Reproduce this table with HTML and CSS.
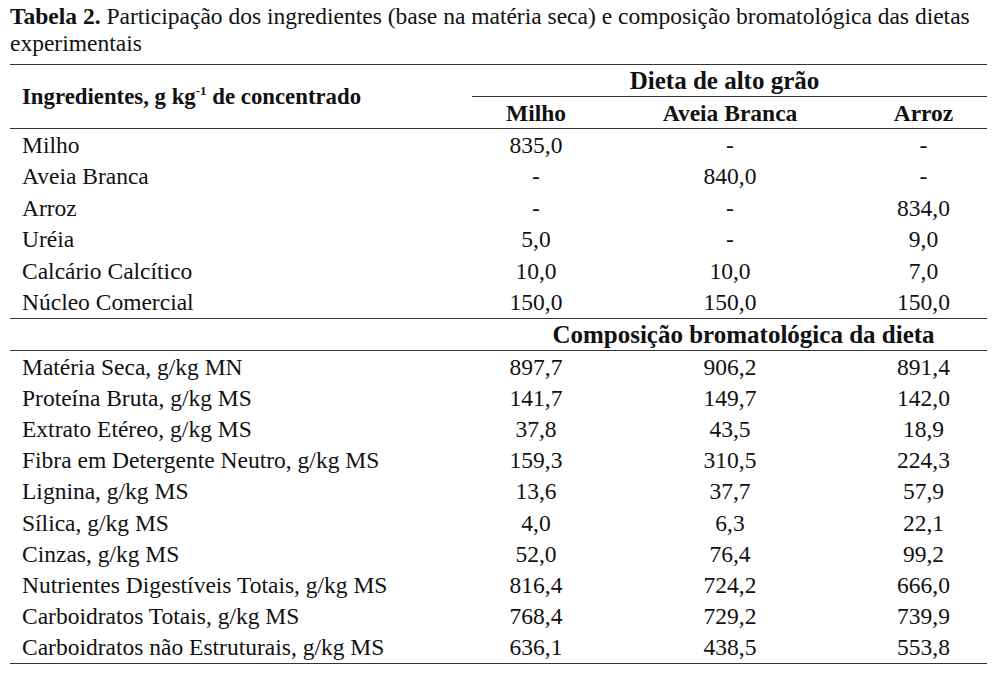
FILE: index.html
```html
<!DOCTYPE html>
<html lang="pt">
<head>
<meta charset="utf-8">
<title>Tabela 2</title>
<link rel="stylesheet" href="styles.css">
</head>
<body>
<div class="page">
  <p class="caption"><b>Tabela 2.</b> Participação dos ingredientes (base na matéria seca) e composição bromatológica das dietas<br>experimentais</p>
  <table class="tbl">
    <colgroup>
      <col class="c-name">
      <col class="c-milho">
      <col class="c-aveia">
      <col class="c-arroz">
    </colgroup>
    <thead>
      <tr class="h1">
        <th rowspan="2" class="name-h">Ingredientes, g kg<sup>-1</sup> de concentrado</th>
        <th colspan="3" class="group">Dieta de alto grão</th>
      </tr>
      <tr class="h2">
        <th>Milho</th>
        <th>Aveia Branca</th>
        <th>Arroz</th>
      </tr>
    </thead>
    <tbody class="g1">
      <tr><td>Milho</td><td>835,0</td><td>-</td><td>-</td></tr>
      <tr><td>Aveia Branca</td><td>-</td><td>840,0</td><td>-</td></tr>
      <tr><td>Arroz</td><td>-</td><td>-</td><td>834,0</td></tr>
      <tr><td>Uréia</td><td>5,0</td><td>-</td><td>9,0</td></tr>
      <tr><td>Calcário Calcítico</td><td>10,0</td><td>10,0</td><td>7,0</td></tr>
      <tr class="last"><td>Núcleo Comercial</td><td>150,0</td><td>150,0</td><td>150,0</td></tr>
    </tbody>
    <tbody class="sub">
      <tr><th></th><th colspan="3" class="sub-title">Composição bromatológica da dieta</th></tr>
    </tbody>
    <tbody class="g2">
      <tr><td>Matéria Seca, g/kg MN</td><td>897,7</td><td>906,2</td><td>891,4</td></tr>
      <tr><td>Proteína Bruta, g/kg MS</td><td>141,7</td><td>149,7</td><td>142,0</td></tr>
      <tr><td>Extrato Etéreo, g/kg MS</td><td>37,8</td><td>43,5</td><td>18,9</td></tr>
      <tr><td>Fibra em Detergente Neutro, g/kg MS</td><td>159,3</td><td>310,5</td><td>224,3</td></tr>
      <tr><td>Lignina, g/kg MS</td><td>13,6</td><td>37,7</td><td>57,9</td></tr>
      <tr><td>Sílica, g/kg MS</td><td>4,0</td><td>6,3</td><td>22,1</td></tr>
      <tr><td>Cinzas, g/kg MS</td><td>52,0</td><td>76,4</td><td>99,2</td></tr>
      <tr><td>Nutrientes Digestíveis Totais, g/kg MS</td><td>816,4</td><td>724,2</td><td>666,0</td></tr>
      <tr><td>Carboidratos Totais, g/kg MS</td><td>768,4</td><td>729,2</td><td>739,9</td></tr>
      <tr class="last"><td>Carboidratos não Estruturais, g/kg MS</td><td>636,1</td><td>438,5</td><td>553,8</td></tr>
    </tbody>
  </table>
</div>
</body>
</html>
```

FILE: styles.css
```css
html, body {
  margin: 0;
  padding: 0;
  background: #fff;
}
body {
  font-family: "Liberation Serif", "Times New Roman", serif;
  color: #111;
  font-size: 23.5px;
}
.page {
  padding: 3px 10px 0 10px;
}
.caption {
  margin: 0;
  line-height: 27px;
  font-size: 23.5px;
  height: 61px;
  white-space: nowrap;
}
.caption b {
  font-weight: bold;
}
.tbl {
  width: 977px;
  border-collapse: collapse;
  border-top: 1px solid #333;
  border-bottom: 1px solid #333;
  table-layout: fixed;
}
.c-name { width: 462px; }
.c-milho { width: 128px; }
.c-aveia { width: 260px; }
.c-arroz { width: 127px; }
.tbl th, .tbl td {
  padding: 0;
  vertical-align: middle;
  line-height: 24px;
}
.tbl th {
  font-weight: bold;
  text-align: center;
  font-size: 23.5px;
}
.tbl td {
  text-align: center;
}
.tbl td:first-child {
  text-align: left;
  padding-left: 12px;
}
.tbl .name-h {
  text-align: left;
  padding-left: 12px;
  font-size: 22.8px;
  border-bottom: 1px solid #333;
}
.name-h sup {
  font-size: 13px;
  vertical-align: 9px;
  line-height: 0;
}
.h1 th { height: 31px; }
.tbl .group {
  border-bottom: 1px solid #333;
  font-size: 25px;
  padding-right: 10px;
}
.h2 th {
  height: 31px;
  border-bottom: 1px solid #333;
}
.g1 td { height: 31.5px; }
.g1 .last td { border-bottom: 1px solid #333; }
.sub th {
  height: 31px;
  border-bottom: 1px solid #333;
}
.tbl .sub-title {
  font-size: 25px;
  padding-left: 28px;
}
.g2 td { height: 31.2px; }
```
